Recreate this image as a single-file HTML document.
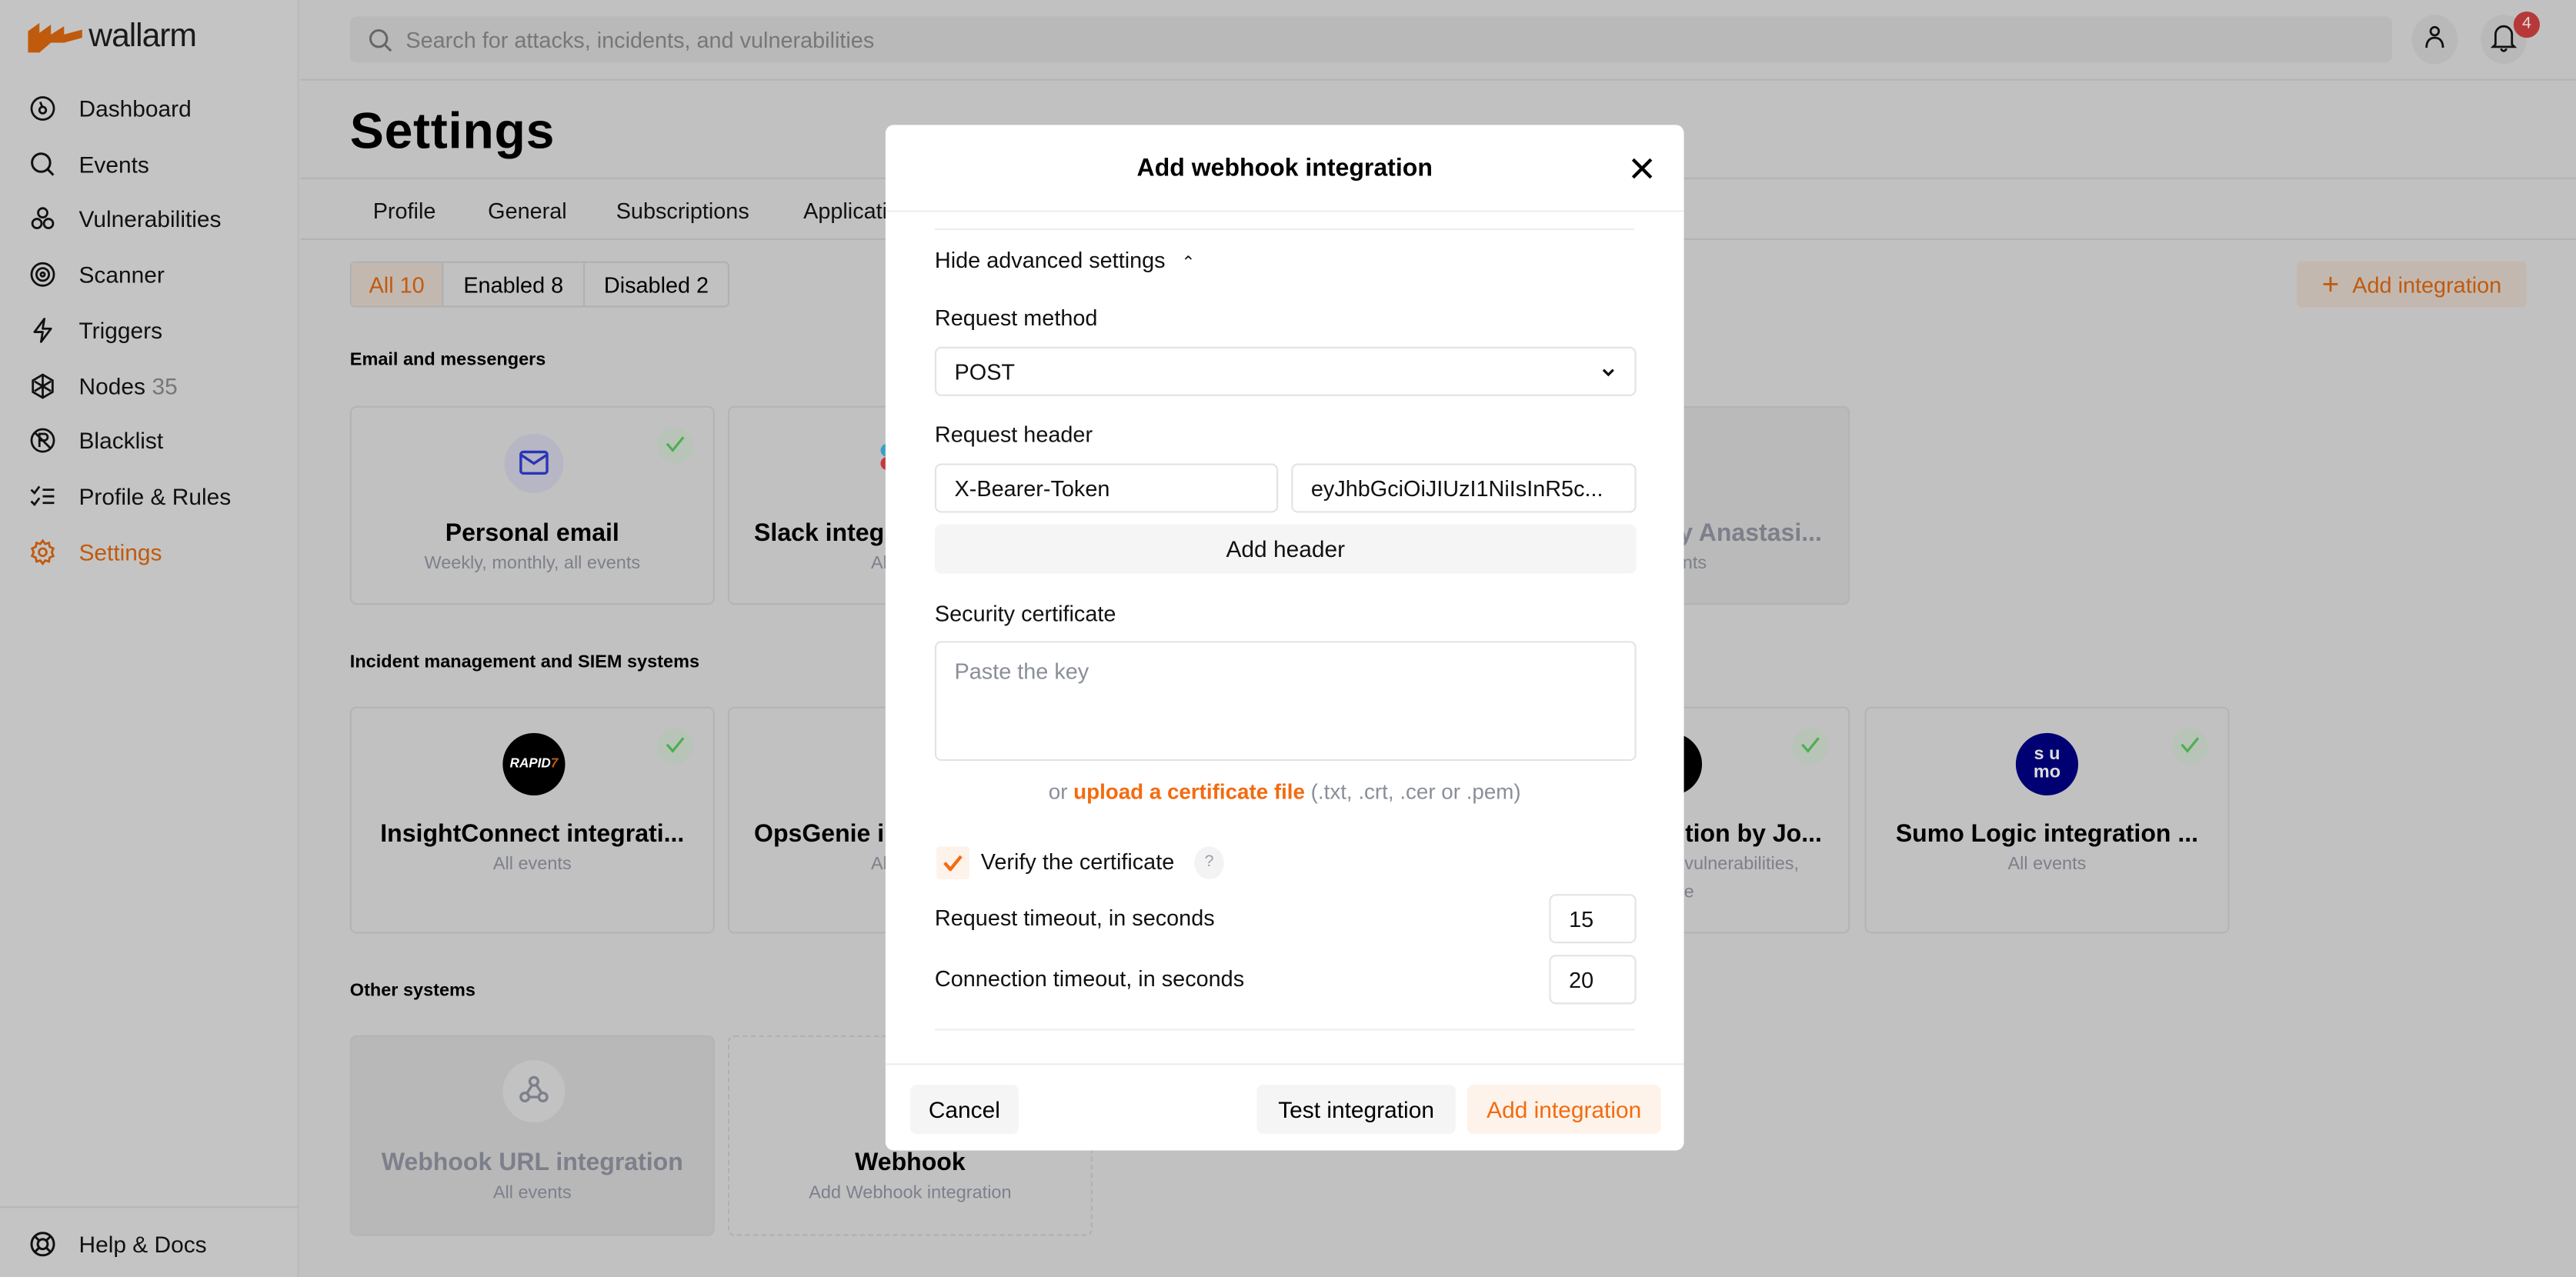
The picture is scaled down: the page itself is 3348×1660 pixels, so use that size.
<!DOCTYPE html>
<html><head><meta charset="utf-8"><style>
*{box-sizing:border-box;margin:0;padding:0}
html,body{width:3348px;height:1660px;overflow:hidden;background:#c2c2c2}
#s{position:absolute;left:0;top:0;width:1568px;height:777px;transform:scale(2.1352,2.1364);transform-origin:0 0;font-family:"Liberation Sans",sans-serif;color:#000;background:#c1c1c1}
.a{position:absolute}
.side{left:0;top:0;width:182px;height:777px;background:#c4c4c4;border-right:1px solid #bababa}
.nav{left:18px;font-size:14px;color:#111;display:flex;align-items:center;gap:14px;height:20px}
.nav svg{width:16px;height:16px}
.card{position:absolute;width:222px;border:1px solid #b4b4b4;border-radius:4px;text-align:center}
.ct{position:absolute;left:10px;right:10px;font-weight:bold;font-size:15px;white-space:nowrap;overflow:hidden}
.cs{position:absolute;left:10px;right:10px;font-size:11px;color:#7d808b}
.chk{position:absolute;width:22px;height:22px;border-radius:50%;background:#b8c4b8;top:12px;right:12px}
.sec{font-size:11px;font-weight:bold;left:213px}
.m{left:539px;top:76px;width:486px;height:624px;background:#fff;border-radius:5px;overflow:hidden}
.lbl{position:absolute;left:30px;font-size:13.5px;color:#111}
.inp{position:absolute;border:1px solid #e3e3e6;border-radius:4px;background:#fff;font-size:13.5px;padding-left:11px;display:flex;align-items:center;color:#111}
.btn{position:absolute;border-radius:4px;font-size:14px;display:flex;align-items:center;justify-content:center}
</style></head><body><div id="s">
<div class="a side"></div>
<svg class="a" style="left:17px;top:14px" width="34" height="18" viewBox="0 0 34 18"><path d="M0 5 L7 0 L7 6 L14 1 L14 7 L22 2 L22 7 L33 4 L33 9 L22 12 L14 12 L7 18 L0 18Z" fill="#c05a0d"/></svg>
<div class="a" style="left:54px;top:11px;font-size:20px;color:#1a1a1a;letter-spacing:-0.5px">wallarm</div>
<div class="a" style="left:213px;top:10px;width:1243px;height:28px;background:#b9b9b9;border-radius:4px"></div>
<svg class="a" style="left:224px;top:17px" width="15" height="15" viewBox="0 0 15 15"><circle cx="6.5" cy="6.5" r="5" fill="none" stroke="#666" stroke-width="1.4"/><path d="M10.5 10.5L14 14" stroke="#666" stroke-width="1.4"/></svg>
<div class="a" style="left:247px;top:17px;font-size:13.5px;color:#777">Search for attacks, incidents, and vulnerabilities</div>
<div class="a" style="left:1468px;top:9px;width:28px;height:30px;border-radius:50%;background:#b9b9b9"></div>
<svg class="a" style="left:1476px;top:15px" width="12" height="16" viewBox="0 0 12 16"><circle cx="6" cy="4" r="2.5" fill="none" stroke="#111" stroke-width="1.3"/><path d="M1 14c0-4 2-6 5-6s5 2 5 6" fill="none" stroke="#111" stroke-width="1.3"/></svg>
<div class="a" style="left:1510px;top:9px;width:28px;height:30px;border-radius:50%;background:#b9b9b9"></div>
<svg class="a" style="left:1516px;top:14px" width="16" height="18" viewBox="0 0 16 18"><path d="M3 13V7a5 5 0 0110 0v6l1.5 1.5h-13Z M6.5 15.5a1.5 1.5 0 003 0" fill="none" stroke="#111" stroke-width="1.3"/></svg>
<div class="a" style="left:1530px;top:7px;width:16px;height:16px;border-radius:50%;background:#b73838;color:#ddd;font-size:10px;text-align:center;line-height:16px">4</div>
<div class="a" style="left:183px;top:48px;width:1385px;height:1px;background:#b3b3b3"></div>
<div class="a" style="left:213px;top:62px;font-size:31px;font-weight:bold;letter-spacing:0.3px">Settings</div>
<div class="a" style="left:183px;top:108px;width:1385px;height:1px;background:#b3b3b3"></div>
<div class="a" style="left:227px;top:121px;font-size:13.5px;color:#111">Profile</div>
<div class="a" style="left:297px;top:121px;font-size:13.5px;color:#111">General</div>
<div class="a" style="left:375px;top:121px;font-size:13.5px;color:#111">Subscriptions</div>
<div class="a" style="left:489px;top:121px;font-size:13.5px;color:#111">Applications</div>
<div class="a" style="left:183px;top:145px;width:1385px;height:1px;background:#b3b3b3"></div>
<div class="a" style="left:213px;top:159px;width:231px;height:28px;border:1px solid #b0b0b0;border-radius:3px;display:flex;font-size:13.5px">
<div style="width:56px;background:#c3b8b0;color:#c05a0d;display:flex;align-items:center;justify-content:center;border-right:1px solid #b0b0b0">All 10</div>
<div style="width:86px;display:flex;align-items:center;justify-content:center;border-right:1px solid #b0b0b0">Enabled 8</div>
<div style="flex:1;display:flex;align-items:center;justify-content:center">Disabled 2</div></div>
<div class="a" style="left:1398px;top:159px;width:140px;height:28px;background:#c3b8b0;border-radius:3px;color:#c05a0d;font-size:13.5px;display:flex;align-items:center;justify-content:center;gap:8px"><span style="font-size:18px;line-height:1">+</span>Add integration</div>
<div class="a sec" style="top:213px">Email and messengers</div>
<div class="a sec" style="top:397px">Incident management and SIEM systems</div>
<div class="a sec" style="top:597px">Other systems</div>
<div class="card" style="left:213px;top:247px;height:121px"><div class="a" style="left:93px;top:16px;width:36px;height:36px;border-radius:50%;background:#b6b6c4"></div><svg class="a" style="left:102px;top:26px" width="18" height="15" viewBox="0 0 18 15"><rect x="1" y="1" width="16" height="13" rx="1.5" fill="none" stroke="#2a34b8" stroke-width="1.6"/><path d="M1.5 3L9 8l7.5-5" fill="none" stroke="#2a34b8" stroke-width="1.6"/></svg><div class="chk"></div><svg class="a" style="right:17px;top:17px" width="12" height="10"><path d="M1 5l3.5 4L11 1" fill="none" stroke="#4caf50" stroke-width="1.5"/></svg><div class="ct" style="top:68px">Personal email</div><div class="cs" style="top:89px">Weekly, monthly, all events</div></div>
<div class="card" style="left:443px;top:247px;height:121px"><div class="a" style="left:92px;top:22px;width:8px;height:8px;border-radius:50%;background:#3a9fc4"></div><div class="a" style="left:92px;top:30px;width:8px;height:8px;border-radius:50%;background:#c43a3a"></div><div class="ct" style="top:68px;text-align:left;left:15px">Slack integration</div><div class="cs" style="top:89px">All events</div></div>
<div class="card" style="left:904px;top:247px;height:121px;background:#bababa"><div class="ct" style="top:68px;color:#7d808b;text-align:right;left:auto;right:16px">y Anastasi...</div><div class="cs" style="top:89px">All events</div></div>
<div class="card" style="left:213px;top:430px;height:138px"><div class="a" style="left:92px;top:15px;width:38px;height:38px;border-radius:50%;background:#000;color:#fff;font-size:8px;font-weight:bold;font-style:italic;line-height:38px">RAPID<span style="color:#c05a0d">7</span></div><div class="chk"></div><svg class="a" style="right:17px;top:17px" width="12" height="10"><path d="M1 5l3.5 4L11 1" fill="none" stroke="#4caf50" stroke-width="1.5"/></svg><div class="ct" style="top:68px">InsightConnect integrati...</div><div class="cs" style="top:89px">All events</div></div>
<div class="card" style="left:443px;top:430px;height:138px"><div class="ct" style="top:68px;text-align:left;left:15px">OpsGenie integration</div><div class="cs" style="top:89px">All events</div></div>
<div class="card" style="left:904px;top:430px;height:138px"><div class="a" style="left:93px;top:15px;width:38px;height:38px;border-radius:50%;background:#000"></div><div class="chk"></div><svg class="a" style="right:17px;top:17px" width="12" height="10"><path d="M1 5l3.5 4L11 1" fill="none" stroke="#4caf50" stroke-width="1.5"/></svg><div class="ct" style="top:68px;text-align:right;left:auto;right:16px">tion by Jo...</div><div class="cs" style="top:89px;text-align:right;right:30px">vulnerabilities,</div><div class="cs" style="top:106px;text-align:left;left:120px">e</div></div>
<div class="card" style="left:1135px;top:430px;height:138px"><div class="a" style="left:91px;top:15px;width:38px;height:38px;border-radius:50%;background:#000072;color:#ddd;font-size:11px;font-weight:bold;line-height:11px;padding-top:8px">s u<br>mo</div><div class="chk"></div><svg class="a" style="right:17px;top:17px" width="12" height="10"><path d="M1 5l3.5 4L11 1" fill="none" stroke="#4caf50" stroke-width="1.5"/></svg><div class="ct" style="top:68px">Sumo Logic integration ...</div><div class="cs" style="top:89px">All events</div></div>
<div class="card" style="left:213px;top:630px;height:122px;background:#b8b8b8"><div class="a" style="left:92px;top:14px;width:38px;height:38px;border-radius:50%;background:#c2c2c2"></div><svg class="a" style="left:101px;top:22px" width="20" height="20" viewBox="0 0 20 20"><g fill="none" stroke="#7d808b" stroke-width="1.6"><circle cx="10" cy="5" r="2.5"/><circle cx="4.5" cy="14.5" r="2.5"/><circle cx="15.5" cy="14.5" r="2.5"/><path d="M8.8 7.5L5.5 12.5M11.5 7.2l3 4.5M7 14.5h6"/></g></svg><div class="ct" style="top:68px;color:#7d808b">Webhook URL integration</div><div class="cs" style="top:89px">All events</div></div>
<div class="card" style="left:443px;top:630px;height:122px;border:1px dashed #b0b0b0"><div class="ct" style="top:68px">Webhook</div><div class="cs" style="top:89px">Add Webhook integration</div></div>
<div class="a nav" style="top:56px"><svg viewBox="0 0 16 16"><circle cx="8" cy="8" r="6.8" fill="none" stroke="#111" stroke-width="1.3"/><circle cx="8" cy="9" r="2" fill="none" stroke="#111" stroke-width="1.3"/><path d="M6.5 4l1.2 3" stroke="#111" stroke-width="1.3"/></svg>Dashboard</div>
<div class="a nav" style="top:90px"><svg viewBox="0 0 16 16"><circle cx="7" cy="7" r="5.5" fill="none" stroke="#111" stroke-width="1.4"/><path d="M11 11l3.5 3.5" stroke="#111" stroke-width="1.4"/></svg>Events</div>
<div class="a nav" style="top:123px"><svg viewBox="0 0 16 16"><g fill="none" stroke="#111" stroke-width="1.3"><circle cx="8" cy="4.5" r="2.8"/><circle cx="4.5" cy="11" r="2.8"/><circle cx="11.5" cy="11" r="2.8"/></g></svg>Vulnerabilities</div>
<div class="a nav" style="top:157px"><svg viewBox="0 0 16 16"><g fill="none" stroke="#111" stroke-width="1.3"><circle cx="8" cy="8" r="6.8"/><circle cx="8" cy="8" r="3.8"/><circle cx="8" cy="8" r="1.2"/></g></svg>Scanner</div>
<div class="a nav" style="top:191px"><svg viewBox="0 0 16 16"><path d="M9 1L3 9h5l-1 6 6-8H8z" fill="none" stroke="#111" stroke-width="1.3" stroke-linejoin="round"/></svg>Triggers</div>
<div class="a nav" style="top:225px"><svg viewBox="0 0 16 16"><g fill="none" stroke="#111" stroke-width="1.3"><path d="M8 1l6 3.5v7L8 15l-6-3.5v-7z"/><path d="M3 5l10 6M13 5L3 11M8 1v14"/></g></svg>Nodes <span style="color:#777;margin-left:-10px">35</span></div>
<div class="a nav" style="top:258px"><svg viewBox="0 0 16 16"><g fill="none" stroke="#111" stroke-width="1.3"><circle cx="8" cy="8" r="6.8"/><path d="M3 3l10 10M6 12V4h3a2 2 0 010 4H6"/></g></svg>Blacklist</div>
<div class="a nav" style="top:292px"><svg viewBox="0 0 16 16"><g fill="none" stroke="#111" stroke-width="1.3"><path d="M1 4l2 2 3-4M1 11l2 2 3-4M8 4h7M8 8h7M8 12h7"/></g></svg>Profile &amp; Rules</div>
<div class="a nav" style="top:326px;color:#c05a0d"><svg viewBox="0 0 16 16"><g fill="none" stroke="#c05a0d" stroke-width="1.3"><circle cx="8" cy="8" r="2.3"/><path d="M8 1l1.5 2 2.3-.7.4 2.4 2.3 1-1 2.3 1 2.3-2.3 1-.4 2.4-2.3-.7L8 15l-1.5-2-2.3.7-.4-2.4-2.3-1 1-2.3-1-2.3 2.3-1 .4-2.4 2.3.7z"/></g></svg>Settings</div>
<div class="a" style="left:0;top:734px;width:182px;height:1px;background:#b6b6b6"></div>
<div class="a nav" style="top:747px"><svg viewBox="0 0 16 16"><g fill="none" stroke="#111" stroke-width="1.4"><circle cx="8" cy="8" r="6.8"/><circle cx="8" cy="8" r="3"/><path d="M3.2 3.2l2.7 2.7M12.8 3.2l-2.7 2.7M3.2 12.8l2.7-2.7M12.8 12.8l-2.7-2.7"/></g></svg>Help &amp; Docs</div>
<div class="a m">
<div class="a" style="left:0;top:18px;width:486px;text-align:center;font-size:15px;font-weight:bold">Add webhook integration</div>
<svg class="a" style="left:454px;top:20px" width="13" height="13"><path d="M1 1l11 11M12 1L1 12" stroke="#000" stroke-width="2"/></svg>
<div class="a" style="left:0;top:52px;width:486px;height:1px;background:#eee"></div>
<div class="a" style="left:30px;top:63px;width:426px;height:1px;background:#eee"></div>
<div class="lbl" style="top:75px">Hide advanced settings <span style="font-size:10px;margin-left:6px">&#8963;</span></div>
<div class="lbl" style="top:110px">Request method</div>
<div class="inp" style="left:30px;top:135px;width:427px;height:30px">POST<svg class="a" style="right:12px;top:12px" width="8" height="6"><path d="M1 1l3 3 3-3" fill="none" stroke="#111" stroke-width="1.5"/></svg></div>
<div class="lbl" style="top:181px">Request header</div>
<div class="inp" style="left:30px;top:206px;width:209px;height:30px">X-Bearer-Token</div>
<div class="inp" style="left:247px;top:206px;width:210px;height:30px">eyJhbGciOiJIUzI1NiIsInR5c...</div>
<div class="btn" style="left:30px;top:243px;width:427px;height:30px;background:#f5f5f5;color:#111">Add header</div>
<div class="lbl" style="top:290px">Security certificate</div>
<div class="inp" style="left:30px;top:314px;width:427px;height:73px;align-items:flex-start;padding-top:10px;color:#8a8e99">Paste the key</div>
<div class="a" style="left:0;top:398px;width:486px;text-align:center;font-size:13px;color:#8a8e99">or <b style="color:#f36b10">upload a certificate file</b> (.txt, .crt, .cer or .pem)</div>
<div class="a" style="left:31px;top:439px;width:20px;height:20px;background:#fdf3ea;border-radius:2px"></div>
<svg class="a" style="left:35px;top:444px" width="12" height="10"><path d="M1 5l3.5 4L11 1" fill="none" stroke="#f36b10" stroke-width="2"/></svg>
<div class="lbl" style="top:441px;left:58px">Verify the certificate</div>
<div class="a" style="left:188px;top:439px;width:18px;height:20px;border-radius:50%;background:#f3f3f3;color:#9a9ea8;font-size:10px;text-align:center;line-height:20px">?</div>
<div class="lbl" style="top:475px">Request timeout, in seconds</div>
<div class="inp" style="left:404px;top:468px;width:53px;height:30px">15</div>
<div class="lbl" style="top:512px">Connection timeout, in seconds</div>
<div class="inp" style="left:404px;top:505px;width:53px;height:30px">20</div>
<div class="a" style="left:30px;top:550px;width:426px;height:1px;background:#eee"></div>
<div class="a" style="left:0;top:571px;width:486px;height:1px;background:#eee"></div>
<div class="btn" style="left:15px;top:584px;width:66px;height:30px;background:#f5f5f5">Cancel</div>
<div class="btn" style="left:226px;top:584px;width:121px;height:30px;background:#f5f5f5">Test integration</div>
<div class="btn" style="left:354px;top:584px;width:118px;height:30px;background:#fdf3ea;color:#f36b10">Add integration</div>
</div>
</div></body></html>
